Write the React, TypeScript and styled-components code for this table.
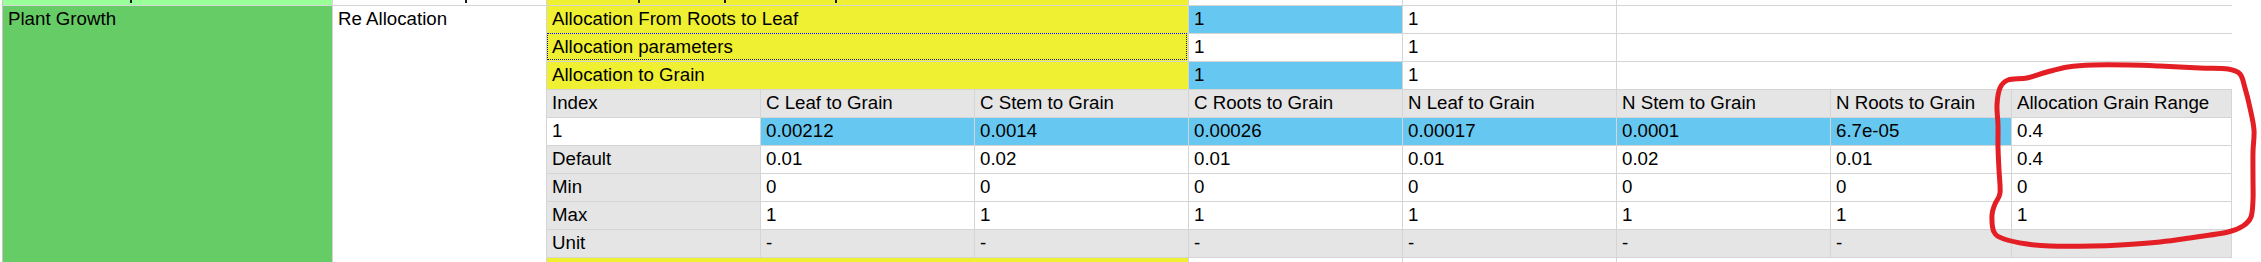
import React from "react";
import styled, { createGlobalStyle } from "styled-components";

const LINE = "#d5d5d5";
const GRAY = "#e5e5e5";
const BLUE = "#66c8f0";
const YELLOW = "#f0f032";
const GREEN = "#66cd66";
const LIGHT_GREEN = "#99ff99";

type Tone = "plain" | "gray" | "blue" | "yellow";

const toneBg: Record<Tone, string> = {
  plain: "#ffffff",
  gray: GRAY,
  blue: BLUE,
  yellow: YELLOW,
};

// widths of the table columns (fill + 1px right line)
const COLS = [214, 214, 214, 214, 214, 214, 181, 220];

const headers = [
  "Index",
  "C Leaf to Grain",
  "C Stem to Grain",
  "C Roots to Grain",
  "N Leaf to Grain",
  "N Stem to Grain",
  "N Roots to Grain",
  "Allocation Grain Range",
];

const tableRows: { cells: string[]; tones: Tone[] }[] = [
  {
    cells: ["1", "0.00212", "0.0014", "0.00026", "0.00017", "0.0001", "6.7e-05", "0.4"],
    tones: ["plain", "blue", "blue", "blue", "blue", "blue", "blue", "plain"],
  },
  {
    cells: ["Default", "0.01", "0.02", "0.01", "0.01", "0.02", "0.01", "0.4"],
    tones: ["gray", "plain", "plain", "plain", "plain", "plain", "plain", "plain"],
  },
  {
    cells: ["Min", "0", "0", "0", "0", "0", "0", "0"],
    tones: ["gray", "plain", "plain", "plain", "plain", "plain", "plain", "plain"],
  },
  {
    cells: ["Max", "1", "1", "1", "1", "1", "1", "1"],
    tones: ["gray", "plain", "plain", "plain", "plain", "plain", "plain", "plain"],
  },
  {
    cells: ["Unit", "-", "-", "-", "-", "-", "-", ""],
    tones: ["gray", "gray", "gray", "gray", "gray", "gray", "gray", "gray"],
  },
];

const params = [
  { label: "Allocation From Roots to Leaf", value: "1", tone: "blue" as Tone, selected: false },
  { label: "Allocation parameters", value: "1", tone: "plain" as Tone, selected: true },
  { label: "Allocation to Grain", value: "1", tone: "blue" as Tone, selected: false },
];

// red hand-drawn loop around the last column
const loop: [number, number][] = [
  [2000, 88], [2008, 80], [2027, 78], [2047, 72], [2068, 67], [2093, 65], [2130, 65],
  [2160, 66], [2200, 68], [2228, 69], [2240, 74], [2245, 88], [2250, 108], [2254, 130],
  [2253, 152], [2253, 180], [2253, 200], [2251, 217], [2243, 226], [2228, 232],
  [2190, 238], [2160, 242], [2120, 245], [2093, 246], [2050, 246], [2027, 244],
  [2004, 239], [1994, 232], [1992, 215], [1995, 204], [2000, 193], [1999, 170],
  [1998, 147], [1998, 125], [1997, 105],
];

const smoothPath = (pts: [number, number][]) => {
  const n = pts.length;
  let d = `M ${pts[0][0]} ${pts[0][1]}`;
  for (let i = 0; i < n; i++) {
    const p0 = pts[(i - 1 + n) % n];
    const p1 = pts[i];
    const p2 = pts[(i + 1) % n];
    const p3 = pts[(i + 2) % n];
    const c1 = [p1[0] + (p2[0] - p0[0]) / 6, p1[1] + (p2[1] - p0[1]) / 6];
    const c2 = [p2[0] - (p3[0] - p1[0]) / 6, p2[1] - (p3[1] - p1[1]) / 6];
    d += ` C ${c1[0]} ${c1[1]} ${c2[0]} ${c2[1]} ${p2[0]} ${p2[1]}`;
  }
  return d + " Z";
};

// descender bits of the row cut off above, offsets from cell start
const Marks = ({ at }: { at: number[] }) => (
  <>
    {at.map((x, i) => (
      <Descender key={i} $gap={i === 0 ? x : x - at[i - 1] - 2} />
    ))}
  </>
);

const App = () => {
  return (
    <>
      <GlobalStyle />
      <Sheet>
        <GroupColumn $width={331} $edge>
          <Strip $bg={LIGHT_GREEN}>
            <Marks at={[127]} />
          </Strip>
          <GroupCell $bg={GREEN}>Plant Growth</GroupCell>
        </GroupColumn>

        <GroupColumn $width={214}>
          <Strip $bg="#ffffff">
            <Marks at={[132]} />
          </Strip>
          <GroupCell $bg="#ffffff">Re Allocation</GroupCell>
        </GroupColumn>

        <RightArea>
          <Strip $bg="#ffffff">
            <StripCell $w={642} $bg={YELLOW}>
              <Marks at={[91, 177, 288]} />
            </StripCell>
            <StripCell $w={214} $bg="#ffffff" />
            <StripCell $w={214} $bg="#ffffff" />
          </Strip>

          {params.map((p) => (
            <Row key={p.label}>
              {p.selected ? (
                <SelectedCell $w={642} $tone="yellow">
                  {p.label}
                </SelectedCell>
              ) : (
                <Cell $w={642} $tone="yellow">
                  {p.label}
                </Cell>
              )}
              <Cell $w={214} $tone={p.tone}>
                {p.value}
              </Cell>
              <Cell $w={214} $tone="plain">
                1
              </Cell>
              <Cell $tone="plain" $open />
            </Row>
          ))}

          <Row>
            {headers.map((h, i) => (
              <Cell key={h} $w={COLS[i]} $tone="gray">
                {h}
              </Cell>
            ))}
          </Row>

          {tableRows.map((r) => (
            <Row key={r.cells[0]}>
              {r.cells.map((c, i) => (
                <Cell key={i} $w={COLS[i]} $tone={r.tones[i]}>
                  {c}
                </Cell>
              ))}
            </Row>
          ))}

          <TailRow>
            <TailCell $w={642} $bg={YELLOW} />
            <TailCell $w={214} $bg="#ffffff" />
            <TailCell $w={214} $bg="#ffffff" />
          </TailRow>
        </RightArea>

        <Annotation width="2261" height="262" viewBox="0 0 2261 262">
          <path
            d={smoothPath(loop)}
            fill="none"
            stroke="#e31e24"
            strokeWidth="5"
            strokeLinejoin="round"
            strokeLinecap="round"
          />
        </Annotation>
      </Sheet>
    </>
  );
};

export default App;

const GlobalStyle = createGlobalStyle`
  html, body {
    margin: 0;
    padding: 0;
    background: #ffffff;
  }
  body {
    font-family: "Liberation Sans", Arial, sans-serif;
    font-size: 18.7px;
    color: #000;
  }
`;

const Sheet = styled.div`
  position: relative;
  display: flex;
  width: 2261px;
  height: 262px;
  padding-left: 2px;
  box-sizing: border-box;
  overflow: hidden;
`;

const GroupColumn = styled.div<{ $width: number; $edge?: boolean }>`
  flex: none;
  display: flex;
  flex-direction: column;
  width: ${(p) => p.$width}px;
  box-sizing: border-box;
  border-left: ${(p) => (p.$edge ? "1px solid #c4c4c4" : "none")};
  border-right: 1px solid ${LINE};
`;

const Strip = styled.div<{ $bg: string }>`
  flex: none;
  display: flex;
  height: 6px;
  box-sizing: border-box;
  border-bottom: 1px solid ${LINE};
  background: ${(p) => p.$bg};
  overflow: hidden;
`;

const StripCell = styled.div<{ $w: number; $bg: string }>`
  flex: none;
  display: flex;
  width: ${(p) => p.$w}px;
  box-sizing: border-box;
  border-right: 1px solid ${LINE};
  background: ${(p) => p.$bg};
`;

const Descender = styled.span<{ $gap: number }>`
  flex: none;
  width: 2px;
  height: 3px;
  margin-left: ${(p) => p.$gap}px;
  background: #1a1a1a;
`;

const GroupCell = styled.div<{ $bg: string }>`
  flex: 1;
  padding: 0 5px;
  line-height: 25px;
  background: ${(p) => p.$bg};
  white-space: nowrap;
`;

const RightArea = styled.div`
  flex: none;
  display: flex;
  flex-direction: column;
  width: 1685px;
`;

const Row = styled.div`
  display: flex;
  height: 28px;
`;

const Cell = styled.div<{ $w?: number; $tone: Tone; $open?: boolean }>`
  flex: ${(p) => (p.$w ? "none" : "1")};
  width: ${(p) => (p.$w ? `${p.$w}px` : "auto")};
  box-sizing: border-box;
  padding: 0 5px;
  line-height: 25px;
  background: ${(p) => toneBg[p.$tone]};
  border-bottom: 1px solid ${LINE};
  border-right: ${(p) => (p.$open ? "none" : `1px solid ${LINE}`)};
  white-space: nowrap;
  overflow: hidden;
`;

const SelectedCell = styled(Cell)`
  position: relative;
  overflow: visible;

  &::after {
    content: "";
    position: absolute;
    top: -1px;
    left: 0;
    right: 1px;
    bottom: 1px;
    border: 1px dotted #1c1c8c;
  }
`;

const TailRow = styled.div`
  display: flex;
  flex: 1;
`;

const TailCell = styled.div<{ $w: number; $bg: string }>`
  flex: none;
  width: ${(p) => p.$w}px;
  box-sizing: border-box;
  border-right: 1px solid ${LINE};
  background: ${(p) => p.$bg};
`;

const Annotation = styled.svg`
  position: absolute;
  top: 0;
  left: 0;
  pointer-events: none;
`;
